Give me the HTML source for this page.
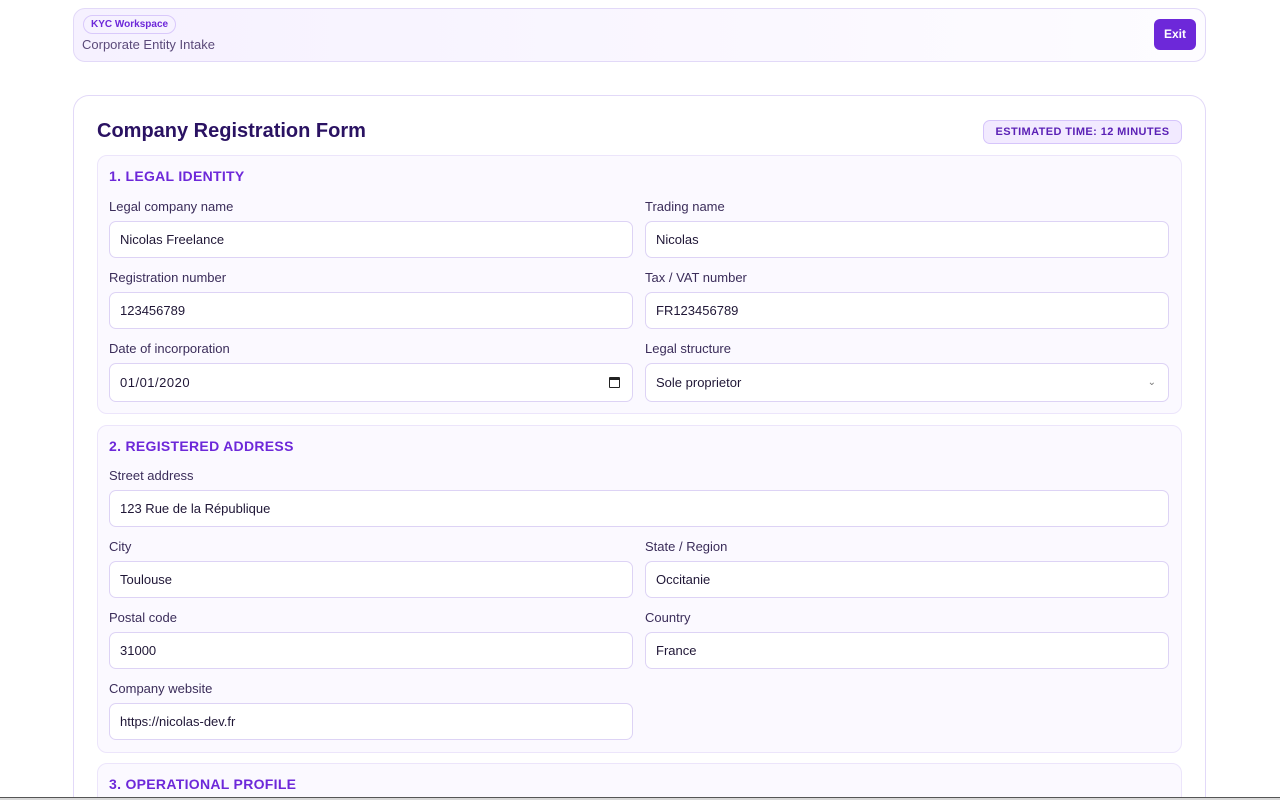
<!DOCTYPE html>
<html><head><meta charset="utf-8"><style>
*{box-sizing:border-box;margin:0;padding:0}
html,body{width:1280px;height:800px;overflow:hidden}
body{background:#fff;font-family:"Liberation Sans",sans-serif;position:relative}
.hdr{position:absolute;left:73px;top:8px;width:1133px;height:54px;border:1px solid #e2d9f8;border-radius:12px;background:linear-gradient(90deg,#f6f1ff,#fdfcff)}
.kyc{position:absolute;left:9px;top:6px;height:19px;padding:0 7px;border:1px solid #d9c9fb;border-radius:10px;font-size:10px;font-weight:bold;color:#6d28d9;line-height:17px}
.sub{position:absolute;left:8px;top:28px;font-size:13px;color:#5b4a7a}
.exit{position:absolute;right:9px;top:10px;width:42px;height:31px;background:#6d28d9;border-radius:6px;color:#fff;font-size:12px;font-weight:bold;text-align:center;line-height:31px}
.main{position:absolute;left:73px;top:95px;width:1133px;height:705px;border:1px solid #e2d9f8;border-bottom:none;border-radius:16px 16px 0 0;background:#fff;overflow:hidden}
h1{position:absolute;left:23px;top:24px;font-size:20px;color:#2a1262;font-weight:bold}
.est{position:absolute;left:909px;top:24px;width:199px;height:24px;border:1px solid #d6c5fb;background:#f2eaff;border-radius:7px;font-size:11px;font-weight:bold;color:#5b21b6;text-align:center;line-height:22px;letter-spacing:.4px}
.sec{position:absolute;left:23px;width:1085px;border:1px solid #ece5fb;border-radius:10px;background:#fbf9ff}
.st{position:absolute;left:11px;font-size:14px;font-weight:bold;color:#6d28d9;letter-spacing:.3px}
.lb{position:absolute;font-size:13px;color:#3b2d5a}
.in{position:absolute;width:524px;height:37px;border:1px solid #ddd3f5;border-radius:7px;background:#fff;font-size:13px;color:#1f1636;padding-left:10px;line-height:35px}
</style></head><body>
<div class="hdr"><div class="kyc">KYC Workspace</div><div class="sub">Corporate Entity Intake</div><div class="exit">Exit</div></div>
<div class="main">
<h1>Company Registration Form</h1>
<div class="est">ESTIMATED TIME: 12 MINUTES</div>
<div class="sec" style="top:59px;height:259px">
<div class="st" style="top:12px">1. LEGAL IDENTITY</div>
<div class="lb" style="left:11px;top:43px">Legal company name</div><div class="lb" style="left:547px;top:43px">Trading name</div>
<div class="in" style="left:11px;top:65px">Nicolas Freelance</div><div class="in" style="left:547px;top:65px">Nicolas</div>
<div class="lb" style="left:11px;top:114px">Registration number</div><div class="lb" style="left:547px;top:114px">Tax / VAT number</div>
<div class="in" style="left:11px;top:136px">123456789</div><div class="in" style="left:547px;top:136px">FR123456789</div>
<div class="lb" style="left:11px;top:185px">Date of incorporation</div><div class="lb" style="left:547px;top:185px">Legal structure</div>
<div class="in" style="left:11px;top:207px;height:39px;line-height:37px;letter-spacing:.5px">01/01/2020<span style="position:absolute;right:12px;top:13px;width:11px;height:11px;border:1.5px solid #222;border-top-width:3px;border-radius:1px"></span></div>
<div class="in" style="left:547px;top:207px;height:39px;line-height:37px">Sole proprietor<span style="position:absolute;right:12px;top:0;font-size:10px;color:#777">&#8964;</span></div>
</div>
<div class="sec" style="top:329px;height:328px">
<div class="st" style="top:12px">2. REGISTERED ADDRESS</div>
<div class="lb" style="left:11px;top:42px">Street address</div>
<div class="in" style="left:11px;top:64px;width:1060px">123 Rue de la République</div>
<div class="lb" style="left:11px;top:113px">City</div><div class="lb" style="left:547px;top:113px">State / Region</div>
<div class="in" style="left:11px;top:135px">Toulouse</div><div class="in" style="left:547px;top:135px">Occitanie</div>
<div class="lb" style="left:11px;top:184px">Postal code</div><div class="lb" style="left:547px;top:184px">Country</div>
<div class="in" style="left:11px;top:206px">31000</div><div class="in" style="left:547px;top:206px">France</div>
<div class="lb" style="left:11px;top:255px">Company website</div>
<div class="in" style="left:11px;top:277px">https://nicolas-dev.fr</div>
</div>
<div class="sec" style="top:667px;height:60px">
<div class="st" style="top:12px">3. OPERATIONAL PROFILE</div>
</div>
</div>
<div style="position:absolute;left:0;top:797px;width:1280px;height:3px;background:#d8d8d8;border-top:1px solid #555"></div>
</body></html>
